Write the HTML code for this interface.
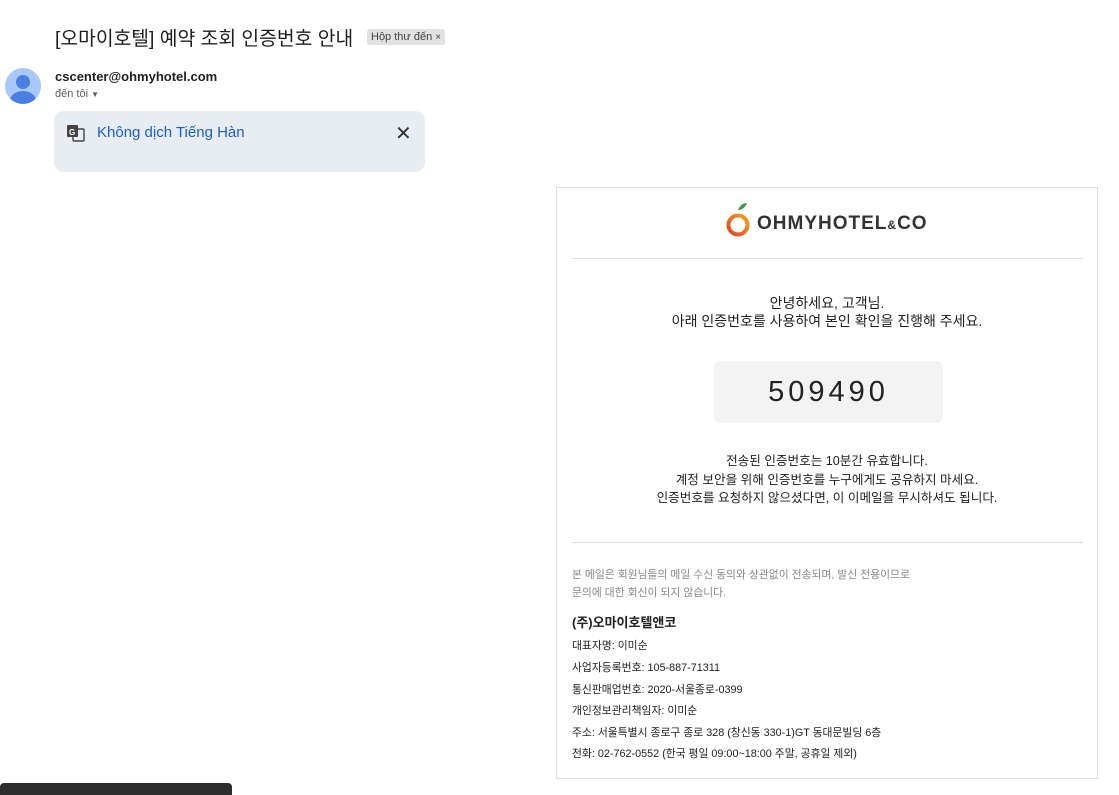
<!DOCTYPE html>
<html><head><meta charset="utf-8"><style>
*{margin:0;padding:0;box-sizing:border-box}
body{width:1119px;height:793px;overflow:hidden;background:#fff;font-family:"Liberation Sans","Noto Sans CJK KR",sans-serif;color:#1f1f1f;position:relative}
.a{position:absolute}
.title{left:55px;top:23px;font-size:19.3px;color:#1f1f1f;white-space:nowrap}
.tag{left:367px;top:29px;background:#e1e3e1;border-radius:3px;font-size:11px;padding:1px 4px;color:#444;height:16px;line-height:14px}
.av{left:5px;top:68px;width:36px;height:36px;border-radius:50%;background:#a8c7fa;overflow:hidden}
.bar{left:54px;top:111px;width:371px;height:61px;background:#e8ecf3;border-radius:10px}
.card{left:556px;top:187px;width:542px;height:592px;border:1px solid #ddd}
.c{text-align:center;width:100%;left:0}
.hr{left:15px;width:511px;height:1px;background:#ddd}
.ft{left:15px;font-size:10.8px;color:#222;white-space:nowrap}
</style></head><body>
<div class="a title">[오마이호텔] 예약 조회 인증번호 안내</div>
<div class="a tag">Hộp thư đến <span style="font-size:10px">×</span></div>
<div class="a av"><div class="a" style="left:11px;top:7px;width:14px;height:14px;border-radius:50%;background:#4b7ee3"></div><div class="a" style="left:5px;top:23px;width:26px;height:20px;border-radius:50%;background:#4b7ee3"></div></div>
<div class="a" style="left:55px;top:69px;font-size:13px;font-weight:bold">cscenter@ohmyhotel.com</div>
<div class="a" style="left:55px;top:88px;font-size:11px;color:#5e5e5e">đến tôi <span style="font-size:8px">▼</span></div>
<div class="a bar">
<svg class="a" style="left:12px;top:12px" width="20" height="20" viewBox="0 0 20 20"><rect x="1" y="2" width="11" height="12" rx="1" fill="#444"/><rect x="7" y="6" width="11" height="12" rx="1" fill="none" stroke="#444" stroke-width="1.4"/><text x="3" y="12" font-size="8" fill="#fff" font-family="Liberation Sans" font-weight="bold">G</text></svg>
<div class="a" style="left:43px;top:13px;font-size:15px;color:#1a5fd0">Không dịch Tiếng Hàn</div>
<div class="a" style="left:341px;top:10px;font-size:20px;color:#333">✕</div>
</div>
<div class="a card">
<svg class="a" style="left:168px;top:14px" width="28" height="38" viewBox="0 0 28 38"><defs><linearGradient id="g" x1="0" y1="1" x2="1" y2="0"><stop offset="0" stop-color="#e0452b"/><stop offset="1" stop-color="#f7a21b"/></linearGradient></defs><path d="M13 8 Q16 1 22 1 Q19 8 13 8Z" fill="#3a9a3a"/><circle cx="13" cy="23" r="9.5" fill="none" stroke="url(#g)" stroke-width="4"/></svg>
<div class="a" style="left:200px;top:25px;font-size:19px;font-weight:bold;color:#333;letter-spacing:1px;white-space:nowrap">OHMYHOTEL<span style="font-size:12px">&amp;</span>CO</div>
<div class="a hr" style="top:70px"></div>
<div class="a c" style="top:106px;font-size:14px;line-height:18px">안녕하세요, 고객님.<br>아래 인증번호를 사용하여 본인 확인을 진행해 주세요.</div>
<div class="a" style="left:157px;top:173px;width:229px;height:62px;background:#f3f3f3;border-radius:6px;text-align:center;line-height:62px;font-size:29px;letter-spacing:4px;color:#222">509490</div>
<div class="a c" style="top:264px;font-size:12.6px;line-height:18.5px">전송된 인증번호는 10분간 유효합니다.<br>계정 보안을 위해 인증번호를 누구에게도 공유하지 마세요.<br>인증번호를 요청하지 않으셨다면, 이 이메일을 무시하셔도 됩니다.</div>
<div class="a hr" style="top:354px"></div>
<div class="a ft" style="top:378px;color:#888;line-height:18px;font-size:10.8px">본 메일은 회원님들의 메일 수신 동의와 상관없이 전송되며, 발신 전용이므로<br>문의에 대한 회신이 되지 않습니다.</div>
<div class="a ft" style="top:424px;font-size:13px;font-weight:bold">(주)오마이호텔앤코</div>
<div class="a ft" style="top:449px">대표자명: 이미순</div>
<div class="a ft" style="top:471px">사업자등록번호: 105-887-71311</div>
<div class="a ft" style="top:493px">통신판매업번호: 2020-서울종로-0399</div>
<div class="a ft" style="top:514px">개인정보관리책임자: 이미순</div>
<div class="a ft" style="top:536px">주소: 서울특별시 종로구 종로 328 (창신동 330-1)GT 동대문빌딩 6층</div>
<div class="a ft" style="top:557px">전화: 02-762-0552 (한국 평일 09:00~18:00 주말, 공휴일 제외)</div>
</div>
<div class="a" style="left:0;top:783px;width:232px;height:12px;background:#2d2d2d;border-radius:4px 4px 0 0"></div>
</body></html>
